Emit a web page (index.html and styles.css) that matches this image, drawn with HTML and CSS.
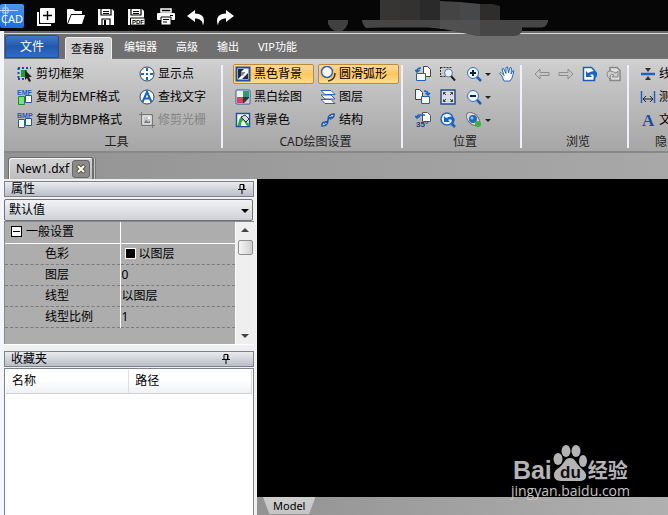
FILE: index.html
```html
<!DOCTYPE html>
<html lang="zh-CN">
<head>
    <meta charset="UTF-8">
    <meta name="viewport" content="width=device-width, initial-scale=1.0">
    <title>New1.dxf</title>
    <link rel="stylesheet" href="styles.css">
</head>
<body>
    <header class="titlebar">
        <svg class="logo" viewBox="0 0 24 24">
            <defs><linearGradient id="logoBg" x1="0" y1="0" x2="0" y2="1"><stop offset="0" stop-color="#4a95f3"/><stop offset="1" stop-color="#1e6be0"/></linearGradient></defs>
            <rect width="24" height="24" rx="2" fill="url(#logoBg)"/>
            <path d="M5.500 0V22M0 6.500H18M3 4h5v5H3z" fill="none" stroke="#b9d8ff"/>
            <text x="1" y="19" class="logo-text">CAD</text>
        </svg>
        <button class="quick" aria-label="新建"><svg viewBox="0 0 18 18"><path d="M1 4v13h13" fill="none" stroke="#fff" stroke-width="2"/><rect x="3" y="0" width="15" height="15" rx="1" fill="#fff"/><path d="M10.500 3v9M6 7.500h9" stroke="#000" stroke-width="1.400"/></svg></button>
        <button class="quick" aria-label="打开"><svg viewBox="0 0 18 18"><path d="M0 16V2q0-1 1-1h5l2 2h7v3H4z" fill="#fff"/><path d="M4.500 7H18l-3 9H1z" fill="#fff"/></svg></button>
        <button class="quick" aria-label="保存"><svg viewBox="0 0 18 18"><path d="M1 1h14l2 2v14H1z" fill="#fff"/><path d="M4 1v6h10V1M5 17v-6h8v6" fill="none" stroke="#000" stroke-width="1.200"/><path d="M6 3.500h6M6 5.500h6" stroke="#000"/><path d="M7 12h2v5H7z" fill="#000"/></svg></button>
        <button class="quick" aria-label="保存为PDF"><svg viewBox="0 0 18 18"><path d="M1 1h14l2 2v14H1z" fill="#fff"/><path d="M4 1v6h10V1" fill="none" stroke="#000" stroke-width="1.200"/><path d="M6 3.500h6M6 5.500h6" stroke="#000"/><path d="M3.500 10H18v7H3.500z" fill="#fff" stroke="#000"/><text x="5" y="16" class="pdf-text">PDF</text></svg></button>
        <button class="quick" aria-label="打印"><svg viewBox="0 0 18 18"><path d="M4 1h10v3H4z" fill="none" stroke="#fff" stroke-width="1.500"/><rect y="5" width="18" height="7" rx="1" fill="#fff"/><path d="M4 9h10v8H4z" fill="#fff" stroke="#000"/><path d="M6 11.500h6M6 14h4" stroke="#000"/><path d="M13 7.500h3" stroke="#000"/></svg></button>
        <button class="quick" aria-label="撤销"><svg viewBox="0 0 18 18"><path d="M0 8 8 2v3.500c8 0 10.500 5 8 12C15.500 12.500 13 10.500 8 10.500V14z" fill="#fff"/></svg></button>
        <button class="quick" aria-label="重做"><svg viewBox="0 0 18 18"><path d="M17 8 9 2v3.500c-8 0-10.500 5-8 12C1.500 12.500 4 10.500 9 10.500V14z" fill="#fff"/></svg></button>
        <!-- blurred-out window caption -->
        <svg class="smudge" viewBox="0 0 240 36">
            <path d="M8 20h20v3q-2 6-6 8h-7q-6-3-7-8z" fill="#404040"/>
            <path d="M42 20h186v2q-2 5-6 5.500h-20v4q-3 4.500-8 4.500h-36l-35-7-15-1.500H60l-14 .500q-4-4-4-8z" fill="#464646"/>
            <path d="M60 0h20v20H60z" fill="#363533"/><path d="M80 0h20v20H80z" fill="#333230"/>
            <path d="M100 0h20v20h-20z" fill="#2a2a2a"/><path d="M120 1l20 1v18h-20z" fill="#444"/>
            <path d="M140 2l20 2v16h-20z" fill="#47484a"/><path d="M160 4h12l8 2v14h-20z" fill="#2e2d2c"/>
            <path d="M120 20h40v16l-33-7h-7z" fill="#505050"/>
        </svg>
    </header>

    <div class="window">
        <nav class="tabs">
            <button class="tab-file">文件</button>
            <button class="tab active">查看器</button>
            <button class="tab">编辑器</button>
            <button class="tab">高级</button>
            <button class="tab">输出</button>
            <button class="tab">VIP功能</button>
        </nav>

        <div class="ribbon">
            <section class="group group-tools">
                <div class="cols">
                    <div class="col">
                        <button class="cmd"><svg viewBox="0 0 16 16"><path d="M1 2h13M1 13h8M1.500 2v11" fill="none" stroke="#174fa8" stroke-width="2" stroke-dasharray="2 2"/><path d="M4 4h6v7H4z" fill="#19a02b"/><path d="M8 4v10l2-2 2 4 2-1-2-4h3z" fill="#222"/></svg>剪切框架</button>
                        <button class="cmd"><svg viewBox="0 0 16 16"><text x="0" y="6" class="tiny">EMF</text><path d="M1.500 7.500h6v8h-6z" fill="#7de07f" stroke="#15912a"/><path d="M8.500 6.500h6v7h-6z" fill="#fff" stroke="#2457a6"/></svg>复制为EMF格式</button>
                        <button class="cmd"><svg viewBox="0 0 16 16"><text x="0" y="6" class="tiny">BMP</text><path d="M1.500 7.500h6v8h-6z" fill="#fff" stroke="#1b5dc0"/><path d="M8.500 6.500h6v7h-6z" fill="#fff" stroke="#2457a6"/></svg>复制为BMP格式</button>
                    </div>
                    <div class="col">
                        <button class="cmd"><svg viewBox="0 0 16 16"><circle cx="8" cy="8" r="7" fill="#fff" stroke="#33435c"/><path d="M8 2v3M8 11v3M2 8h3M11 8h3" stroke="#1763c6" stroke-width="2"/><path d="M7 7h2v2H7z" fill="#1763c6"/></svg>显示点</button>
                        <button class="cmd"><svg viewBox="0 0 16 16"><circle cx="8" cy="8" r="7" fill="#fff" stroke="#33435c"/><path d="M3.500 13 8 3l4.500 10M5.500 9.500h5" fill="none" stroke="#1763c6" stroke-width="2"/></svg>查找文字</button>
                        <button class="cmd" disabled><svg viewBox="0 0 16 16"><path d="M2.500 0v13.500H16M0 2.500h13.500V16" fill="none" stroke="#777"/><path d="M4 4h8v8H4z" fill="#c4c4c4" stroke="#eee"/><path d="M5 11l2-3 2 2 2-1v2z" fill="#777"/><path d="M9 5h2v2H9z" fill="#fff"/></svg>修剪光栅</button>
                    </div>
                </div>
                <h2>工具</h2>
            </section>
            <section class="group group-draw">
                <div class="cols">
                    <div class="col">
                        <button class="cmd on"><svg viewBox="0 0 16 16"><path d="M1.500 1.500h13v13h-13z" fill="#fff" stroke="#23519c" stroke-width="2"/><path d="M3 3h10v10H3z" fill="#1d2a42"/><path d="M13 3v4l-6 6H3l3-3V6l3-3z" fill="#fff"/><path d="M6 6h4v1l-3 3H6z" fill="#888"/></svg>黑色背景</button>
                        <button class="cmd"><svg viewBox="0 0 16 16"><rect x="1" y="1" width="14" height="14" rx="1" fill="#fff" stroke="#2457a6"/><path d="M2 2h6v6H2z" fill="#efefef"/><path d="M8 2h6v6H8z" fill="#2e9b6a"/><path d="M2 8h6v6H2z" fill="#d8455b"/><path d="M8 8h6v6H8z" fill="#333"/><path d="M9 14l5-5v5z" fill="#ccc"/></svg>黑白绘图</button>
                        <button class="cmd"><svg viewBox="0 0 16 16"><path d="M1.500 1.500h13v13h-13z" fill="#fff" stroke="#23519c" stroke-width="1.500"/><path d="M2 14c2-2 1-8 5-10 3 0 3 5 7 8l1 2z" fill="#25b23c"/><path d="M6 14q0-4 2-6l4 6z" fill="#fff"/><path d="M10 3l4 4-3 3-5-5z" fill="#ddd" stroke="#333"/></svg>背景色</button>
                    </div>
                    <div class="col">
                        <button class="cmd on"><svg viewBox="0 0 16 16"><circle cx="7" cy="6" r="5.500" fill="#fff" stroke="#2d62b4" stroke-width="1.500"/><path d="M15 7q0 7-7 8" fill="none" stroke="#333" stroke-width="1.500"/></svg>圆滑弧形</button>
                        <button class="cmd"><svg viewBox="0 0 16 16"><path d="M1 10.500h10l4 4H5zM1 6h10l4 4H5zM1 1.500h10l4 4H5z" fill="#fff" stroke="#2d62b4"/></svg>图层</button>
                        <button class="cmd"><svg viewBox="0 0 16 16"><path d="M2 14C1 8 8 12 8 8S9 2 14 2c1 6-6 2-6 6s-1 6-6 6z" fill="#cfe2fb" stroke="#1d55ad" stroke-width="1.500"/><path d="M4 10l2 4M10 3l3 4M5 9l3 3M9 5l2 3" stroke="#1d55ad"/></svg>结构</button>
                    </div>
                </div>
                <h2>CAD绘图设置</h2>
            </section>
            <section class="group group-pos">
                <div class="icons">
                    <button class="ico" aria-label="左转"><svg viewBox="0 0 16 16"><path d="M8.500.500h4l3 3v7h-7z" fill="#fff" stroke="#444"/><path d="M1.500 7.500h9v7h-9z" fill="#fff" stroke="#2060b8"/><path d="M6 2q-4 0-4 3M0 4l2 2 3-2" fill="none" stroke="#1763c6" stroke-width="1.500"/></svg></button>
                    <button class="ico" aria-label="框选缩放"><svg viewBox="0 0 16 16"><path d="M.500 1.500h12M.500 10.500h6M.500 1v10" stroke="#333" stroke-dasharray="2 1" fill="none"/><circle cx="8.500" cy="7" r="4" fill="#e3f0ff" stroke="#68788f"/><path d="M11 10l4 4.500" stroke="#222" stroke-width="2"/></svg></button>
                    <button class="ico drop" aria-label="放大"><svg viewBox="0 0 16 16"><path d="M10 10l5 5" stroke="#1d5dbb" stroke-width="2.500"/><circle cx="7" cy="7" r="5.500" fill="#e8f3ff" stroke="#3c6fb4"/><path d="M4 7h6M7 4v6" stroke="#123" stroke-width="2"/></svg></button>
                    <button class="ico" aria-label="平移"><svg viewBox="0 0 16 16"><path d="M5 15 3 10 .500 7.500 2 6.500l3 3L3 3l1.500-.500L7 7.500V1.500L8.500 1l1 6 1.500-5.500 1.500.500-.500 6 2-3.500 1 .500-2 7-2 3z" fill="#fff" stroke="#2a68bd"/></svg></button>
                    <button class="ico" aria-label="右转"><svg viewBox="0 0 16 16"><path d="M.500.500h4l3 3v7h-7z" fill="#fff" stroke="#444"/><path d="M6.500 7.500h8v7h-8z" fill="#fff" stroke="#2060b8"/><path d="M9 2q4 0 4 3M10.500 4l2.500 2 2-2" fill="none" stroke="#1763c6" stroke-width="1.500"/></svg></button>
                    <button class="ico" aria-label="适合窗口"><svg viewBox="0 0 16 16"><path d="M1 1h14v14H1z" fill="#d8dde5" stroke="#234f91" stroke-width="1.500"/><path d="M3.500 5.500v-2h2M10.500 3.500h2v2M12.500 10.500v2h-2M5.500 12.500h-2v-2M4 4l2 2M12 4l-2 2M12 12l-2-2M4 12l2-2" fill="none" stroke="#333"/></svg></button>
                    <button class="ico drop" aria-label="缩小"><svg viewBox="0 0 16 16"><path d="M10 10l5 5" stroke="#1d5dbb" stroke-width="2.500"/><circle cx="7" cy="7" r="5.500" fill="#e8f3ff" stroke="#3c6fb4"/><path d="M4 7h6" stroke="#123" stroke-width="2"/></svg></button>
                    <span></span>
                    <button class="ico" aria-label="旋转35度"><svg viewBox="0 0 16 16"><path d="M7.500.500h5l3 3v6h-8z" fill="#fff" stroke="#555"/><path d="M10 3H5q-3 0-3 2M0 4l2 2 3-2" fill="none" stroke="#1763c6" stroke-width="1.500"/><text x="1" y="15" class="deg">35°</text></svg></button>
                    <button class="ico" aria-label="上一视图"><svg viewBox="0 0 16 16"><path d="M10 10l5 5" stroke="#1d5dbb" stroke-width="2.500"/><circle cx="7" cy="7" r="6" fill="#e8f3ff" stroke="#2d67b6" stroke-width="1.500"/><path d="M4 4v6h6L8 8q3-2 4 1 1 2 0 4 4-4 2-7t-8 0z" fill="#1763c6"/></svg></button>
                    <button class="ico drop" aria-label="三维视图"><svg viewBox="0 0 16 16"><ellipse cx="7" cy="7" rx="8" ry="5" transform="rotate(45 7 7)" fill="#d9d9d9" stroke="#777"/><circle cx="7" cy="7" r="4" fill="#2069bd"/><circle cx="6" cy="6" r="1.500" fill="#8bc3f5"/><circle cx="12" cy="12" r="3" fill="#30b53c"/></svg></button>
                </div>
                <h2>位置</h2>
            </section>
            <section class="group group-nav">
                <div class="icons">
                    <button class="ico" aria-label="后退"><svg viewBox="0 0 16 16"><path d="M1 8l5-5v3.500h9v3H6V13z" fill="#c6c6c6" stroke="#8d8d8d"/></svg></button>
                    <button class="ico" aria-label="前进"><svg viewBox="0 0 16 16"><path d="M15 8l-5-5v3.500H1v3h9V13z" fill="#c6c6c6" stroke="#8d8d8d"/></svg></button>
                    <button class="ico" aria-label="上一页"><svg viewBox="0 0 16 16"><path d="M1.500 1.500h8l3 3v10h-11z" fill="#fff" stroke="#1b5bb9" stroke-width="1.500"/><path d="M4 5v6h6L8 9q3-2 4 1 0 2-1 4 5-3 4-7t-9 0z" fill="#1763c6"/></svg></button>
                    <button class="ico" aria-label="下一页"><svg viewBox="0 0 16 16"><path d="M4 1.500h7l3 3v10H4z" fill="#ddd" stroke="#888" stroke-width="1.500"/><path d="M12 5v6H6l2-2Q5 7 4 10q0 2 1 4-5-3-4-7t9 0z" fill="#ccc" stroke="#888"/></svg></button>
                </div>
                <h2>浏览</h2>
            </section>
            <section class="group group-hide">
                <div class="col">
                    <button class="cmd"><svg viewBox="0 0 16 16"><path d="M1 8h14" stroke="#1763c6" stroke-width="2.500"/><path d="M5 2h6L8 6zM5 14h6l-3-4z" fill="#333"/></svg>线</button>
                    <button class="cmd"><svg viewBox="0 0 16 16"><path d="M1.500 2v12M14.500 2v12" stroke="#1763c6" stroke-width="1.500"/><path d="M3 10h10M6 7l-3 3 3 3M10 7l3 3-3 3" fill="none" stroke="#222"/></svg>测</button>
                    <button class="cmd"><svg viewBox="0 0 16 16"><text x="2" y="14" class="letter">A</text></svg>文</button>
                </div>
                <h2>隐</h2>
            </section>
        </div>

        <div class="docs">
            <div class="doc">New1.dxf<button class="close" aria-label="关闭"><svg viewBox="0 0 10 10"><path d="M1.500 1.500l7 7M8.500 1.500l-7 7" stroke="#5b564a" stroke-width="4"/><path d="M2 2l6 6M8 2L2 8" stroke="#fffde8" stroke-width="2"/></svg></button></div>
        </div>

        <main class="work">
            <aside class="side">
                <h3 class="head">属性<svg class="pin" viewBox="0 0 8 10"><path d="M2 5V.500h4V5M0 5.500h8M4 6v4M5.500 1v4" fill="none" stroke="#000"/></svg></h3>
                <div class="combo"><select aria-label="默认值"><option>默认值</option></select></div>
                <div class="props">
                    <table>
                        <tr class="cat"><th><span class="minus"></span>一般设置</th><td></td></tr>
                        <tr><th>色彩</th><td><span class="swatch"></span>以图层</td></tr>
                        <tr><th>图层</th><td>0</td></tr>
                        <tr><th>线型</th><td>以图层</td></tr>
                        <tr><th>线型比例</th><td>1</td></tr>
                    </table>
                    <div class="scroll">
                        <span class="up"></span>
                        <span class="thumb"></span>
                        <span class="down"></span>
                    </div>
                </div>
                <h3 class="head fav">收藏夹<svg class="pin" viewBox="0 0 8 10"><path d="M2 5V.500h4V5M0 5.500h8M4 6v4M5.500 1v4" fill="none" stroke="#000"/></svg></h3>
                <div class="list">
                    <table>
                        <tr><th>名称</th><th>路径</th></tr>
                    </table>
                </div>
            </aside>
            <div class="view">
                <div class="canvas"></div>
                <footer class="sheets">
                    <button class="sheet">Model</button>
                </footer>
                <div class="mark">
                    <div class="brand">
                        <span class="bai">Bai</span>
                        <svg viewBox="0 0 36 38">
                            <g fill="#b4b4b4"><ellipse cx="6" cy="15" rx="4.500" ry="6"/><ellipse cx="14" cy="7" rx="4.500" ry="6"/><ellipse cx="24" cy="7" rx="4.500" ry="6"/><ellipse cx="31" cy="17" rx="4" ry="6"/><path d="M18 14c5 0 6 5 10 9s7 6 6 10-5 4-8 4H10c-4 0-8-1-8-6s4-6 7-9 4-8 9-8z"/></g>
                            <text x="8" y="34" class="du">du</text>
                        </svg>
                        <span class="jy">经验</span>
                    </div>
                    <div class="url">jingyan.baidu.com</div>
                </div>
            </div>
        </main>
    </div>
</body>
</html>
```
FILE: styles.css
```css
* { box-sizing: border-box; }
body {
    margin: 0;
    height: 100vh;
    display: flex;
    flex-direction: column;
    overflow: hidden;
    background: #f3f6fd;
    color: #000;
    font-family: "Noto Sans", "Noto Sans CJK SC", sans-serif;
    font-size: 12px;
    line-height: 16px;
}
button {
    border: none;
    background: none;
    padding: 0;
    font: inherit;
    color: inherit;
    white-space: nowrap;
}
svg { display: block; flex: none; }
h2, h3 { margin: 0; font-size: 12px; font-weight: normal; }

/* title bar */
.titlebar {
    position: relative;
    display: flex;
    align-items: center;
    flex: none;
    height: 31px;
    background: #060606;
}
.logo { width: 24px; height: 24px; margin: 0 7px 0 0; }
.logo-text { font: 11px "Noto Sans", sans-serif; fill: #fff; }
.quick {
    width: 30px;
    height: 31px;
    display: flex;
    align-items: center;
    justify-content: center;
    padding-top: 2px;
}
.quick svg { width: 18px; height: 18px; }
.pdf-text { font: bold 6px "Liberation Sans", sans-serif; fill: #000; }
.smudge {
    position: absolute;
    left: 320px;
    top: 0;
    width: 240px;
    height: 36px;
}

.window {
    flex: 1;
    min-height: 0;
    display: flex;
    flex-direction: column;
    margin-left: 4px;
}

/* tabs */
.tabs {
    display: flex;
    align-items: flex-end;
    flex: none;
    height: 28px;
    border-top: 2px solid #6a6a6a;
    background: linear-gradient(#d8d8d8 1px, #6f6f6f 1px);
    border-bottom: 1px solid #777;
    color: #fff;
    font-size: 11px;
}
.tab-file {
    width: 54px;
    height: 23px;
    margin: 0 6px 0 1px;
    border: 1px solid #1f4e96;
    border-radius: 3px 3px 0 0;
    background: linear-gradient(#4079c8, #2259ae 50%, #2f6cc8);
    font-size: 12px;
}
.tab { height: 22px; padding: 0 10px; }
.tab + .tab { padding-left: 9px; }
.tab.active {
    padding: 0 7px 0 5px;
    margin: 0 3px -1px 0;
    border: 1px solid #efefef;
    border-bottom: none;
    border-radius: 3px 3px 0 0;
    background: #cfcfcf;
    color: #000;
}

/* ribbon */
.ribbon {
    display: flex;
    flex: none;
    height: 94px;
    padding: 6px 0 3px;
    overflow: hidden;
    border-bottom: 2px solid #888;
    background: linear-gradient(#d0d0d0, #c2c2c2 30%, #a6a6a6);
}
.group {
    display: flex;
    flex-direction: column;
    justify-content: space-between;
    flex: none;
    border-right: 1px solid #777;
    box-shadow: 1px 0 #eef1f8, -1px 0 #eef1f8;
}
.group h2 { text-align: center; color: #222; line-height: 12px; }
.group-tools { width: 218px; box-shadow: 1px 0 #eef1f8; }
.group-tools h2 { padding-left: 8px; }
.group-draw { width: 180px; }
.group-draw h2 { padding-left: 8px; }
.group-pos { width: 119px; }
.group-pos h2, .group-nav h2 { padding-left: 8px; }
.group-nav { width: 107px; }
.group-hide { flex: 1; border-right: none; padding-left: 10px; }
.group-hide h2 { text-align: left; padding-left: 17px; }
.cols { display: flex; }
.group-tools .cols { padding-left: 11px; gap: 6px; }
.group-draw .cols { padding-left: 11px; gap: 4px; }
.col {
    display: flex;
    flex-direction: column;
    align-items: stretch;
    gap: 3px;
    margin-top: -1px;
}
.cmd {
    display: flex;
    align-items: center;
    height: 20px;
    gap: 3px;
    padding: 0 8px 0 1px;
    border: 1px solid transparent;
    border-radius: 2px;
}
.group-draw .cmd { padding-right: 11px; }
.cmd svg, .ico svg { width: 16px; height: 16px; }
.cmd:disabled { color: #858585; }
.cmd.on {
    border-color: #c28a30;
    background: linear-gradient(#fbd9a0, #ffc65e 50%, #ffdf8a);
}
.icons {
    display: grid;
    grid-auto-rows: 20px;
    row-gap: 3px;
    margin-top: -1px;
    justify-content: start;
}
.group-pos .icons { grid-template-columns: 25px 26px 33px 16px; padding-left: 13px; }
.group-nav .icons { grid-template-columns: repeat(4, 24px); padding-left: 13px; }
.ico { display: flex; align-items: center; gap: 3px; }
.ico.drop::after {
    content: "";
    border: 3px solid transparent;
    border-top-color: #222;
    margin-top: 3px;
}
.tiny { font: bold 7px "Liberation Sans", sans-serif; fill: #1b5dc0; }
.deg { font: bold 8px "Liberation Sans", sans-serif; fill: #173c78; }
.letter { font: bold 17px "Liberation Serif", serif; fill: #174fa8; }

/* document tabs */
.docs {
    display: flex;
    align-items: flex-end;
    flex: none;
    height: 26px;
    padding-left: 4px;
    background: linear-gradient(90deg, #939393, #a8a8a8);
}
.doc {
    display: flex;
    align-items: center;
    gap: 3px;
    height: 22px;
    padding: 0 2px 0 7px;
    border: 1px solid #6d6d6d;
    border-right-width: 2px;
    border-bottom: none;
    border-radius: 3px 3px 0 0;
    background: linear-gradient(#d4d4d4, #bdbdbd);
    box-shadow: inset 1px 1px #f2f2f2, 1px 0 #c8c8c8, 2px 0 #777;
}
.close {
    width: 18px;
    height: 18px;
    display: grid;
    place-items: center;
    border: 1px solid #666;
    border-radius: 3px;
    background: #8b8b8b;
}
.close svg { width: 10px; height: 10px; }

/* side panels */
.work { display: flex; flex: 1; min-height: 0; }
.side {
    display: flex;
    flex-direction: column;
    width: 253px;
    flex: none;
    padding: 2px 3px 0 0;
    background: #f0f0f0;
}
.head {
    display: flex;
    align-items: center;
    justify-content: space-between;
    height: 16px;
    flex: none;
    padding: 0 7px 0 6px;
    border: 1px solid #7d828a;
    background: linear-gradient(#e9ebee, #b9bfc7);
}
.pin { width: 8px; height: 10px; }
.combo { position: relative; margin: 2px 1px 0 0; flex: none; }
.combo select {
    display: block;
    width: 100%;
    height: 22px;
    padding: 0 4px;
    appearance: none;
    border: 1px solid #6f7278;
    border-radius: 2px;
    background: linear-gradient(#f3f3f4, #cdd1d6);
    color: #000;
    font: inherit;
}
.combo::after {
    content: "";
    position: absolute;
    right: 4px;
    top: 10px;
    border: 4px solid transparent;
    border-top-color: #000;
    pointer-events: none;
}
.props {
    display: flex;
    flex: none;
    height: 123px;
    border: 1px solid #888;
    border-width: 1px 0 0 1px;
    box-shadow: 0 1px #fff;
    background: #adadad;
}
table { border-collapse: collapse; table-layout: fixed; }
th { font-weight: normal; text-align: left; }
.props table { flex: 1; width: 100%; height: 105px; }
.props tr { height: 21px; }
.props th, .props td { padding: 0; border-bottom: 1px dashed #7c7c7c; line-height: 20px; }
.props th { width: 50%; padding-left: 40px; border-right: 1px solid #fff; }
.props td { padding-left: 1px; }
.props .cat th { padding-left: 6px; }
.props .cat th, .props .cat td { border-bottom: 1px solid #fff; }
.minus {
    display: inline-block;
    width: 11px;
    height: 11px;
    margin-right: 4px;
    border: 1px solid #000;
    background: linear-gradient(#000, #000) center / 7px 1px no-repeat #fff;
    vertical-align: -1px;
}
.swatch {
    display: inline-block;
    width: 11px;
    height: 11px;
    margin: 0 3px;
    border: 1px solid #fff;
    background: #000;
    vertical-align: -1px;
}
.scroll {
    display: flex;
    flex-direction: column;
    align-items: center;
    width: 19px;
    padding: 6px 0;
    border-left: 1px solid #fff;
    background: #efefef;
}
.up { border: 4px solid transparent; border-top-width: 0; border-bottom-color: #444; }
.down { border: 4px solid transparent; border-bottom-width: 0; border-top-color: #444; margin-top: auto; }
.thumb {
    width: 15px;
    height: 15px;
    margin-top: 8px;
    border: 1px solid #8f8f8f;
    border-radius: 2px;
    background: linear-gradient(90deg, #f4f4f4, #d0d0d0);
}
.fav { margin-top: 7px; padding-right: 23px; }
.list {
    flex: 1;
    margin-top: 1px;
    padding: 1px;
    border: 1px solid #7f858f;
    border-bottom: none;
    background: #fff;
}
.list table { width: 100%; }
.list th {
    height: 23px;
    padding: 0 6px;
    border-right: 1px solid #dcdfe3;
    border-bottom: 1px solid #d0d2d5;
    background: linear-gradient(#fff 45%, #eff1f3);
}

/* drawing view */
.view { position: relative; flex: 1; display: flex; flex-direction: column; min-width: 0; }
.canvas { flex: 1; background: #000; }
.sheets {
    height: 18px;
    flex: none;
    padding-left: 6px;
    background: linear-gradient(90deg, #939393, #b0b0b0);
}
.sheet {
    height: 17px;
    padding: 0 10px;
    background: linear-gradient(#cecece, #c4c4c4);
    clip-path: polygon(0 0, 100% 0, 88% 100%, 12% 100%);
    font-size: 11px;
}
.mark { position: absolute; right: 38px; bottom: 15px; color: #b4b4b4; }
.brand { display: flex; align-items: flex-end; padding-left: 2px; }
.brand svg { width: 36px; height: 38px; }
.bai { font: bold 25px/24px "Liberation Sans", sans-serif; }
.du { font: bold 17px "Liberation Sans", sans-serif; fill: #111; }
.jy { font: bold 20px/24px "Noto Sans CJK SC", sans-serif; }
.url { font: 14px/18px "Open Sans", sans-serif; color: #c4c4c4; }
```
